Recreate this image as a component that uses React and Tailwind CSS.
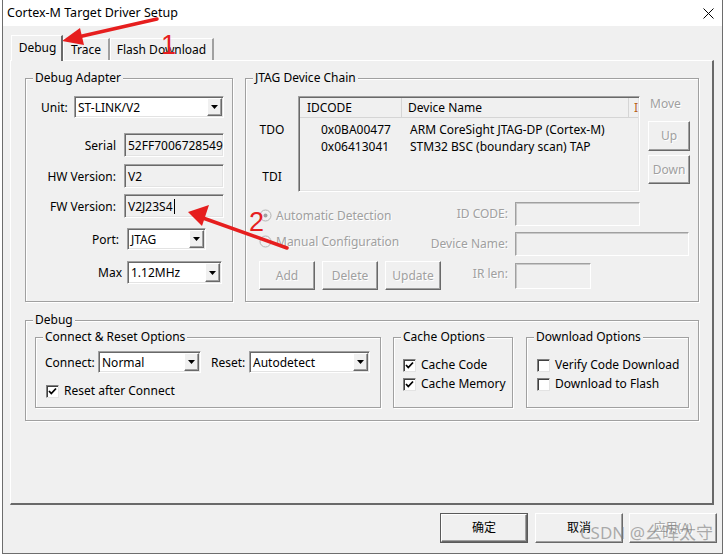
import React from "react";

const SUNKEN =
  "border border-t-[#a0a0a0] border-l-[#a0a0a0] border-r-white border-b-white shadow-[inset_1px_1px_0_#696969,inset_-1px_-1px_0_#e3e3e3]";
const RAISED =
  "border border-t-white border-l-white border-r-[#696969] border-b-[#696969] shadow-[inset_-1px_-1px_0_#a0a0a0]";
const DIS = "text-[#a0a0a0] [text-shadow:1px_1px_0_#fff]";

function Group({ title, className, children }) {
  return (
    <div
      className={
        "relative border border-[#a0a0a0] shadow-[inset_1px_1px_0_#fff,1px_1px_0_#fff] " +
        className
      }
    >
      <span className="absolute left-[7px] -top-[9px] px-[2px] bg-[#f0f0f0] leading-[16px] whitespace-nowrap">
        {title}
      </span>
      {children}
    </div>
  );
}

function Arrow() {
  return (
    <span className={RAISED + " w-[15px] h-full bg-[#f0f0f0] flex items-center justify-center shrink-0"}>
      <svg width="7" height="4" viewBox="0 0 7 4">
        <polygon points="0,0 7,0 3.5,4" fill="#000" />
      </svg>
    </span>
  );
}

function Combo({ value, className }) {
  return (
    <div className={SUNKEN + " bg-white p-[1px] flex items-center " + className}>
      <span className="flex-1 pl-[2px] pt-[1px] whitespace-nowrap overflow-hidden">{value}</span>
      <Arrow />
    </div>
  );
}

function Field({ children, className }) {
  return (
    <div className={SUNKEN + " bg-[#f0f0f0] flex items-center pl-[3px] pt-[1px] whitespace-nowrap overflow-hidden " + className}>
      {children}
    </div>
  );
}

function DisField({ className }) {
  return (
    <div
      className={
        "border border-t-[#a0a0a0] border-l-[#a0a0a0] border-r-white border-b-white shadow-[inset_1px_1px_0_#c8c8c8] bg-[#f0f0f0] " +
        className
      }
    />
  );
}

function Button({ children, className, disabled }) {
  return (
    <div
      className={
        RAISED +
        " bg-[#f0f0f0] flex items-center justify-center whitespace-nowrap " +
        (disabled ? DIS + " " : "") +
        className
      }
    >
      {children}
    </div>
  );
}

function Check({ checked }) {
  return (
    <span className="w-[13px] h-[13px] bg-white border border-t-[#808080] border-l-[#808080] border-r-[#e3e3e3] border-b-[#e3e3e3] shadow-[inset_1px_1px_0_#404040] flex items-center justify-center shrink-0">
      {checked && (
        <svg width="9" height="9" viewBox="0 0 9 9">
          <polyline points="1,4 3.3,6.5 8,1.5" fill="none" stroke="#000" strokeWidth="1.8" />
        </svg>
      )}
    </span>
  );
}

function Radio({ on }) {
  return (
    <svg width="13" height="13" viewBox="0 0 13 13" className="shrink-0">
      <circle cx="6.5" cy="6.5" r="5.5" fill="#f0f0f0" stroke="#b4b4b4" />
      {on && <circle cx="6.5" cy="6.5" r="2" fill="#a0a0a0" />}
    </svg>
  );
}

function Tab({ label, selected, className }) {
  return selected ? (
    <div
      className={
        "relative z-10 -mb-[1px] h-[26px] bg-[#f0f0f0] border-t border-l border-white border-r-2 border-r-[#696969] flex items-center justify-center pb-[1px] pl-[2px] " +
        className
      }
    >
      {label}
    </div>
  ) : (
    <div
      className={
        "h-[22px] bg-[#f0f0f0] border-t border-l border-white border-r-2 border-r-[#a0a0a0] flex items-center justify-center " +
        className
      }
    >
      {label}
    </div>
  );
}

export default function App() {
  return (
    <div className="relative w-[725px] h-[555px] bg-white overflow-hidden font-['Noto_Sans','Noto_Sans_CJK_SC',sans-serif] text-[12px] leading-[16px] text-black">
      <div className="ml-[2px] w-[721px] h-[554px] border-l border-r border-b border-[#6d6d6d] flex flex-col">
        {/* Title bar */}
        <div className="h-[26px] bg-white flex items-center justify-between pl-[4px] pr-[8px] shrink-0">
          <span className="text-[12.5px]">Cortex-M Target Driver Setup</span>
          <svg width="11" height="11" viewBox="0 0 11 11">
            <line x1="0.5" y1="0.5" x2="10.5" y2="10.5" stroke="#000" strokeWidth="1" />
            <line x1="10.5" y1="0.5" x2="0.5" y2="10.5" stroke="#000" strokeWidth="1" />
          </svg>
        </div>

        {/* Body */}
        <div className="flex-1 bg-[#f0f0f0] flex flex-col">
          {/* Tabs */}
          <div className="pt-[9px] pl-[8px] flex items-end h-[34px]">
            <Tab label="Debug" selected className="w-[52px]" />
            <Tab label="Trace" className="w-[47px]" />
            <Tab label="Flash Download" className="w-[104px]" />
          </div>

          {/* Panel */}
          <div className="ml-[7px] w-[704px] h-[445px] border-t border-l border-white border-r-2 border-b-2 border-r-[#696969] border-b-[#696969] flex flex-col pl-[14px] pt-[17px]">
            <div className="flex gap-[12px]">
              {/* Debug Adapter */}
              <Group title="Debug Adapter" className="w-[208px] h-[224px]">
                <div className="flex flex-col">
                  <div className="mt-[17px] h-[22px] flex items-center pl-[15px]">
                    <span className="w-[33px] pt-[1px]">Unit:</span>
                    <Combo value="ST-LINK/V2" className="w-[150px] h-full" />
                  </div>
                  <div className="mt-[15px] h-[24px] flex items-center">
                    <span className="w-[90px] text-right pt-[1px]">Serial</span>
                    <Field className="ml-[8px] w-[100px] h-full">52FF7006728549</Field>
                  </div>
                  <div className="mt-[7px] h-[24px] flex items-center">
                    <span className="w-[90px] text-right pt-[1px]">HW Version:</span>
                    <Field className="ml-[8px] w-[100px] h-full">V2</Field>
                  </div>
                  <div className="mt-[6px] h-[24px] flex items-center">
                    <span className="w-[90px] text-right pt-[1px]">FW Version:</span>
                    <Field className="ml-[8px] w-[100px] h-full">
                      V2J23S4
                      <span className="ml-[1px] w-[1px] h-[15px] bg-black" />
                    </Field>
                  </div>
                  <div className="mt-[10px] h-[22px] flex items-center">
                    <span className="w-[93px] text-right pt-[1px]">Port:</span>
                    <Combo value="JTAG" className="ml-[8px] w-[79px] h-full" />
                  </div>
                  <div className="mt-[11px] h-[23px] flex items-center">
                    <span className="w-[96px] text-right pt-[1px]">Max</span>
                    <Combo value="1.12MHz" className="ml-[5px] w-[95px] h-full" />
                  </div>
                </div>
              </Group>

              {/* JTAG Device Chain */}
              <Group title="JTAG Device Chain" className="w-[454px] h-[224px]">
                <div className="flex flex-col">
                  <div className="mt-[17px] flex">
                    <div className="w-[52px] flex flex-col items-center pt-[26px]">
                      <span>TDO</span>
                      <span className="mt-[31px]">TDI</span>
                    </div>
                    <div className={SUNKEN + " w-[342px] h-[96px] bg-[#f0f0f0] overflow-hidden p-[1px]"}>
                      <div className="flex h-[20px] border-b border-[#d5d5d5] whitespace-nowrap">
                        <div className="w-[102px] pl-[7px] flex items-center border-r border-[#d5d5d5]">IDCODE</div>
                        <div className="w-[227px] pl-[6px] flex items-center border-r border-[#d5d5d5]">Device Name</div>
                        <div className="flex-1 pl-[5px] flex items-center overflow-hidden text-[#b8641e]">I</div>
                      </div>
                      <div className="pt-[3px] flex flex-col whitespace-nowrap">
                        <div className="flex h-[17px] items-center">
                          <span className="w-[103px] pl-[21px]">0x0BA00477</span>
                          <span className="pl-[7px]">ARM CoreSight JTAG-DP (Cortex-M)</span>
                        </div>
                        <div className="flex h-[17px] items-center">
                          <span className="w-[103px] pl-[21px]">0x06413041</span>
                          <span className="pl-[7px]">STM32 BSC (boundary scan) TAP</span>
                        </div>
                      </div>
                    </div>
                    <div className="ml-[8px] w-[42px] flex flex-col">
                      <span className={DIS + " pl-[2px] whitespace-nowrap"}>Move</span>
                      <Button disabled className="mt-[9px] h-[30px]">Up</Button>
                      <Button disabled className="mt-[4px] h-[29px]">Down</Button>
                    </div>
                  </div>

                  <div className="mt-[10px] h-[24px] flex items-center pl-[13px]">
                    <div className="w-[249px] flex items-center justify-between">
                      <span className={DIS + " flex items-center gap-[4px] mt-[3px]"}>
                        <Radio on />
                        Automatic Detection
                      </span>
                      <span className={DIS}>ID CODE:</span>
                    </div>
                    <DisField className="ml-[7px] w-[125px] h-full" />
                  </div>
                  <div className="mt-[6px] h-[24px] flex items-center pl-[13px]">
                    <div className="w-[249px] flex items-center justify-between">
                      <span className={DIS + " flex items-center gap-[4px] mb-[5px]"}>
                        <Radio />
                        Manual Configuration
                      </span>
                      <span className={DIS}>Device Name:</span>
                    </div>
                    <DisField className="ml-[7px] w-[174px] h-full" />
                  </div>
                  <div className="mt-[5px] h-[29px] flex items-center pl-[13px]">
                    <div className="w-[249px] h-full flex items-center justify-between">
                      <div className="flex gap-[7px] h-full">
                        <Button disabled className="w-[56px] h-full">Add</Button>
                        <Button disabled className="w-[56px] h-full">Delete</Button>
                        <Button disabled className="w-[56px] h-full">Update</Button>
                      </div>
                      <span className={DIS + " mb-[3px]"}>IR len:</span>
                    </div>
                    <DisField className="ml-[7px] w-[76px] h-[26px]" />
                  </div>
                </div>
              </Group>
            </div>

            {/* Debug group */}
            <Group title="Debug" className="mt-[18px] w-[674px] h-[101px]">
              <div className="flex pt-[16px] pl-[9px]">
                <Group title="Connect & Reset Options" className="w-[346px] h-[71px]">
                  <div className="flex flex-col">
                    <div className="mt-[13px] h-[22px] flex items-center pl-[9px]">
                      <span className="w-[53px] pt-[1px]">Connect:</span>
                      <Combo value="Normal" className="w-[103px] h-full" />
                      <span className="ml-[10px] w-[38px] pt-[1px]">Reset:</span>
                      <Combo value="Autodetect" className="w-[121px] h-full" />
                    </div>
                    <div className="mt-[10px] h-[16px] flex items-center pl-[10px] gap-[5px]">
                      <Check checked />
                      <span>Reset after Connect</span>
                    </div>
                  </div>
                </Group>
                <Group title="Cache Options" className="ml-[12px] w-[120px] h-[71px]">
                  <div className="flex flex-col pl-[9px] pt-[19px] gap-[3px]">
                    <div className="h-[16px] flex items-center gap-[5px]">
                      <Check checked />
                      <span>Cache Code</span>
                    </div>
                    <div className="h-[16px] flex items-center gap-[5px]">
                      <Check checked />
                      <span>Cache Memory</span>
                    </div>
                  </div>
                </Group>
                <Group title="Download Options" className="ml-[13px] w-[163px] h-[71px]">
                  <div className="flex flex-col pl-[10px] pt-[19px] gap-[3px]">
                    <div className="h-[16px] flex items-center gap-[5px] whitespace-nowrap">
                      <Check />
                      <span>Verify Code Download</span>
                    </div>
                    <div className="h-[16px] flex items-center gap-[5px] whitespace-nowrap">
                      <Check />
                      <span>Download to Flash</span>
                    </div>
                  </div>
                </Group>
              </div>
            </Group>
          </div>

          {/* Bottom buttons */}
          <div className="mt-[8px] flex justify-end pr-[5px]">
            <div className="w-[88px] h-[30px] border border-[#5a5a5a] flex">
              <Button className="flex-1">确定</Button>
            </div>
            <Button className="ml-[7px] w-[88px] h-[30px]">取消</Button>
            <Button disabled className="ml-[6px] w-[88px] h-[30px]">应用(A)</Button>
          </div>
        </div>
      </div>

      {/* Watermark */}
      <span className="absolute right-[12px] bottom-[12px] text-[17px] leading-[20px] text-[#7a7a7a]/60 pointer-events-none whitespace-nowrap">
        CSDN @幺晖太守
      </span>

      {/* Red annotations */}
      <svg className="absolute left-0 top-0 pointer-events-none" width="725" height="555" viewBox="0 0 725 555">
        <line x1="157" y1="19" x2="78" y2="37" stroke="#e61e1e" strokeWidth="3.5" strokeLinecap="round" />
        <polygon points="62,41 80,28 84,45" fill="#e61e1e" />
        <line x1="287" y1="248" x2="203" y2="218" stroke="#e61e1e" strokeWidth="3.5" strokeLinecap="round" />
        <polygon points="188,212 209,205 202,226" fill="#e61e1e" />
      </svg>
      <span className="absolute left-[161px] top-[30px] text-[27px] leading-[30px] text-[#e61e1e] font-['Liberation_Sans',sans-serif] pointer-events-none">
        1
      </span>
      <span className="absolute left-[249px] top-[207px] text-[27px] leading-[30px] text-[#e61e1e] font-['Liberation_Sans',sans-serif] pointer-events-none">
        2
      </span>
    </div>
  );
}
